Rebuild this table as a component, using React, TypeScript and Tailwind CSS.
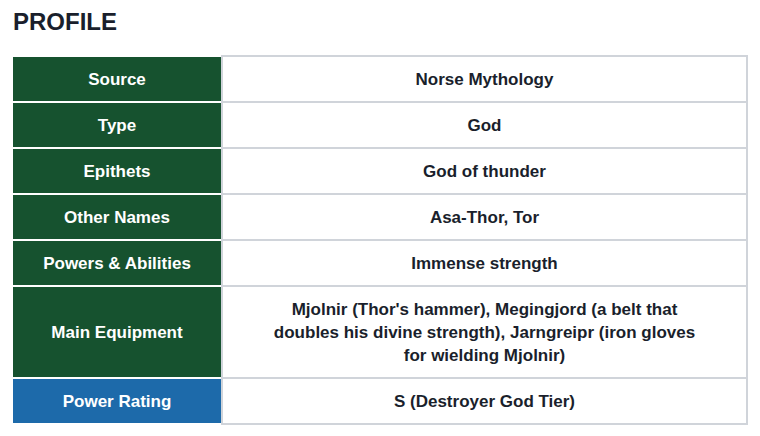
import React from "react";

type Row = { label: string; value: string; blue?: boolean };

const rows: Row[] = [
  { label: "Source", value: "Norse Mythology" },
  { label: "Type", value: "God" },
  { label: "Epithets", value: "God of thunder" },
  { label: "Other Names", value: "Asa-Thor, Tor" },
  { label: "Powers & Abilities", value: "Immense strength" },
  {
    label: "Main Equipment",
    value:
      "Mjolnir (Thor's hammer), Megingjord (a belt that doubles his divine strength), Jarngreipr (iron gloves for wielding Mjolnir)",
  },
  { label: "Power Rating", value: "S (Destroyer God Tier)", blue: true },
];

export default function App() {
  return (
    <div
      className="w-[760px] h-[436px] bg-white pt-[8px] px-[13px]"
      style={{ fontFamily: '"Liberation Sans", Arial, sans-serif' }}
    >
      <h2 className="text-[24px] leading-[28px] font-bold text-[#1a1f2c]">PROFILE</h2>
      <div className="mt-[19px] w-[735px] flex flex-col">
        {rows.map((r, i) => (
          <div key={r.label} className="flex items-stretch">
            <div
              className={
                "w-[208px] shrink-0 flex items-center justify-center text-center text-white font-bold text-[17px] leading-[23px] py-[10.5px] px-2 border-b-2 border-white " +
                (i === 0 ? "border-t-2 " : "") +
                (r.blue ? "bg-[#1d6aaa]" : "bg-[#16522f]")
              }
            >
              {r.label}
            </div>
            <div
              className={
                "flex-1 flex items-center justify-center text-center text-[#1a1f2c] font-bold text-[17px] leading-[23px] py-[10.5px] px-[45px] border-x-2 border-b-2 border-[#d0d4da] " +
                (i === 0 ? "border-t-2" : "")
              }
            >
              {r.value}
            </div>
          </div>
        ))}
      </div>
    </div>
  );
}
